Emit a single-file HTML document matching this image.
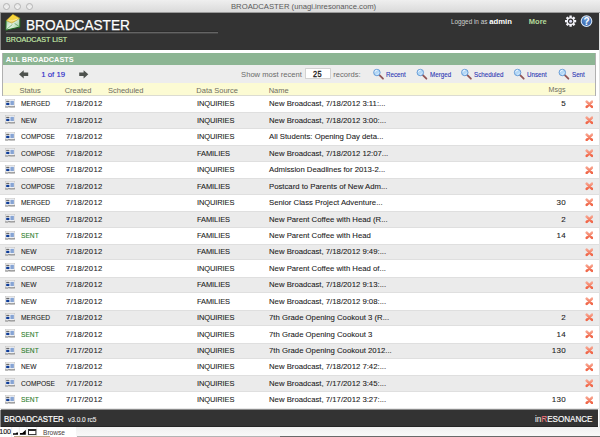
<!DOCTYPE html>
<html><head><meta charset="utf-8">
<style>
*{margin:0;padding:0;box-sizing:border-box}
html,body{width:600px;height:437px;overflow:hidden;background:#fff;font-family:"Liberation Sans",sans-serif}
#win{position:absolute;left:0;top:0;width:600px;height:437px;background:#fff;overflow:hidden}
.a{position:absolute;white-space:nowrap}
#titlebar{left:0;top:0;width:600px;height:13px;background:linear-gradient(#efefef,#dadada);border-bottom:1px solid #9a9a9a}
.light{top:2.9px;width:7px;height:7px;border-radius:50%;border:0.8px solid #b4b4b4;background:linear-gradient(#e6e6e6,#f2f2f2)}
#title{left:231px;top:1.7px;font-size:7.8px;color:#5a5a5a;transform:scaleX(0.985);transform-origin:0 0}
#header{left:1px;top:13px;width:597.8px;height:36.6px;background:#333}
#leftborder{left:0;top:13px;width:1px;height:37px;background:#8a8a8a}
#leftborder2{left:0;top:409.6px;width:1px;height:17.4px;background:#8a8a8a}
#rightborder{left:599px;top:13px;width:1px;height:424px;background:#e2e2e2}
#bigtitle{left:25.7px;top:16.7px;font-size:14.6px;color:#fff;-webkit-text-stroke:0.25px #fff;transform:scaleX(0.935);transform-origin:0 0}
#hline{left:5.8px;top:31px;width:212.5px;height:3px;background:linear-gradient(#2c2c2c 0,#2c2c2c 33%,#646464 33%,#646464 66%,#464646 66%)}
#sub{left:6.4px;top:34.6px;font-size:7.2px;color:#c8eeac;-webkit-text-stroke:0.15px #c8eeac;transform:scaleX(0.99);transform-origin:0 0}
#logged{left:451px;top:17.7px;font-size:6.35px;color:#d0d0d0}
#admin{left:489.3px;top:16.5px;font-size:7.7px;color:#fff;font-weight:bold}
#more{left:528.8px;top:16.9px;font-size:7.5px;font-weight:bold;color:#b5dc9c}
#panel{left:1.5px;top:53.2px;width:594.8px;height:43px;border-left:1px solid #b0b0b0;border-right:1px solid #b0b0b0}
#green{left:0;top:0;width:100%;height:12px;background:#8cb593}
#gtext{left:3.2px;top:2.2px;font-size:7.35px;font-weight:bold;color:#fff}
#tool{left:0;top:12px;width:100%;height:17.8px;background:#ededed}
#yel{left:0;top:29.8px;width:100%;height:13px;background:#fcfbd3;border-bottom:1px solid #dcdcd2}
.hd{top:2.9px;font-size:7.5px;color:#6e6e62}
.tt{font-size:7.6px;color:#6a6a6a;top:6px}
.lk{font-size:6.7px;color:#2a36b4;-webkit-text-stroke:0.1px #2a36b4;transform:scaleX(0.93);transform-origin:0 0}
#rows{left:0;top:96px;width:598.6px}
.r{position:relative;height:16.444px;background:#fff}
.r.g{background:#ebebeb;box-shadow:inset 0 0.8px 0 #dcdcdc,inset 0 -0.8px 0 #dcdcdc}
.r span{position:absolute;top:3.45px;font-size:8.0px;color:#1a1a1a;white-space:nowrap;-webkit-text-stroke:0.08px #1a1a1a;transform:scaleX(0.95);transform-origin:0 0}
.r span.c1{left:20.6px;transform:scaleX(0.83)}
.r span.c2{left:65.6px;letter-spacing:0.25px;transform:scaleX(0.963)}
.r span.c4{left:197.4px;letter-spacing:-0.1px;transform:scaleX(0.935)}
.r span.c5{left:269.4px;transform:scaleX(0.968)}
.r span.c6{right:32.5px;text-align:right;transform:none;letter-spacing:0.35px}
.r span.sent{color:#277a27;-webkit-text-stroke-color:#277a27}
.ic{position:absolute;left:4.8px;top:3px;width:10.2px;height:9px}
.x{position:absolute;left:584.6px;top:3.8px;width:8.8px;height:8.8px}
#footer{left:1px;top:409.6px;width:597px;height:17.4px;background:#333}
#ftitle{left:4.4px;top:413.6px;font-size:8.9px;color:#fff;-webkit-text-stroke:0.2px #fff;transform:scaleX(0.885);transform-origin:0 0}
#fver{left:67.9px;top:415.9px;font-size:6.75px;color:#f0f0f0;-webkit-text-stroke:0.1px #f0f0f0;transform:scaleX(0.96);transform-origin:0 0}
#fres{left:534.8px;top:413.6px;font-size:8.7px;color:#fff;-webkit-text-stroke:0.15px #fff;transform:scaleX(0.93);transform-origin:0 0}
#status{left:0;top:427px;width:600px;height:10px;background:linear-gradient(#f0f0f0,#fafafa)}
#sleft{left:0;top:427px;width:76px;height:10px;background:#fff}
#s100{left:-0.8px;top:428.3px;font-size:7.1px;color:#222;-webkit-text-stroke:0.15px #222}
#sbrowse{left:43px;top:428.6px;font-size:6.6px;color:#4a3c3c}
</style></head><body>
<div id="win">
<svg width="0" height="0" style="position:absolute"><defs><linearGradient id="xg" x1="0" y1="0" x2="0" y2="1"><stop offset="0" stop-color="#f8a08a"/><stop offset="1" stop-color="#f06446"/></linearGradient></defs></svg>
<div class="a" id="titlebar"></div>
<div class="a light" style="left:2.9px"></div>
<div class="a light" style="left:14.2px"></div>
<div class="a light" style="left:25.6px"></div>
<div class="a" id="title">BROADCASTER (unagi.inresonance.com)</div>
<div class="a" id="header"></div>
<div class="a" id="leftborder"></div><div class="a" id="leftborder2"></div>
<div class="a" id="rightborder"></div>
<svg class="a" style="left:0;top:0" width="30" height="34" viewBox="0 0 30 34">
 <defs>
  <linearGradient id="eg" x1="0" y1="0" x2="1" y2="0.6"><stop offset="0" stop-color="#8cc48c"/><stop offset="0.5" stop-color="#e6f4e6"/><stop offset="1" stop-color="#a8d2a8"/></linearGradient>
  <linearGradient id="yg" x1="0" y1="0" x2="0" y2="1"><stop offset="0" stop-color="#ffd92a"/><stop offset="0.55" stop-color="#f4d448"/><stop offset="1" stop-color="#e8cf6a"/></linearGradient>
 </defs>
 <path d="M6,20.6 L19.9,18.2 L19.9,27 L5.9,30.2 Z" fill="url(#eg)" stroke="#1e681e" stroke-width="1"/>
 <path d="M6.2,29.8 L12.4,24.4 M19.6,26.8 L14.6,23.4" stroke="#4e924e" stroke-width="0.7" fill="none"/>
 <path d="M6.2,20.5 L12.8,14.3 L19.9,18.2 L11.8,23.2 Z" fill="url(#yg)" stroke="#a88c28" stroke-width="0.5"/>
 <path d="M8.6,20.6 C11,21.4 14,20.6 17.6,18.9" stroke="#faf2b8" stroke-width="0.8" fill="none"/>
</svg>
<div class="a" id="bigtitle">BROADCASTER</div>
<div class="a" id="hline"></div>
<div class="a" id="sub">BROADCAST LIST</div>
<div class="a" id="logged">Logged in as</div>
<div class="a" id="admin">admin</div>
<div class="a" id="more">More</div>
<svg class="a" style="left:563px;top:14px" width="34" height="15" viewBox="563 14 34 15">
 <g transform="translate(570.6,21.2)" fill="#f4f4fa">
  <path d="M-1.26,-3.69 L-1.13,-5.59 L1.13,-5.59 L1.26,-3.69 L1.72,-3.50 L3.15,-4.75 L4.75,-3.15 L3.50,-1.72 L3.69,-1.26 L5.59,-1.13 L5.59,1.13 L3.69,1.26 L3.50,1.72 L4.75,3.15 L3.15,4.75 L1.72,3.50 L1.26,3.69 L1.13,5.59 L-1.13,5.59 L-1.26,3.69 L-1.72,3.50 L-3.15,4.75 L-4.75,3.15 L-3.50,1.72 L-3.69,1.26 L-5.59,1.13 L-5.59,-1.13 L-3.69,-1.26 L-3.50,-1.72 L-4.75,-3.15 L-3.15,-4.75 L-1.72,-3.50 Z"/>
  <circle r="2.6" fill="#2e2e2e"/>
  <circle r="1.5" fill="#dcdcf4"/>
 </g>
 <defs><radialGradient id="hg" cx="0.5" cy="0.35" r="0.7"><stop offset="0" stop-color="#6a9ad8"/><stop offset="1" stop-color="#2c5ea8"/></radialGradient></defs>
 <circle cx="586.5" cy="21.2" r="5.3" fill="url(#hg)" stroke="#d8e4f4" stroke-width="1.1"/>
 <text x="586.6" y="25" font-family="Liberation Sans" font-weight="bold" font-size="10" fill="#fff" text-anchor="middle">?</text>
</svg>

<div class="a" id="panel">
 <div class="a" id="green"></div>
 <div class="a" id="gtext">ALL BROADCASTS</div>
 <div class="a" id="tool">
  <div class="a tt" style="left:238.6px;top:4.8px">Show most recent</div>
  <div class="a" style="left:302.4px;top:2.6px;width:26.4px;height:11.6px;background:#fff;border:0.8px solid #d2d2d2;border-radius:0.6px"></div>
  <div class="a" style="left:310.9px;top:4.1px;font-size:8.5px;color:#1e1e1e;-webkit-text-stroke:0.35px #1e1e1e;transform:scaleX(0.86);transform-origin:0 0;letter-spacing:0.6px">25</div>
  <div class="a tt" style="left:330.8px;top:4.8px">records:</div>
  <div class="a" style="left:38.7px;top:4.6px;font-size:7.85px;color:#2828c8;-webkit-text-stroke:0.12px #2828c8">1 of 19</div>
 </div>
 <div class="a" id="yel">
  <span class="a hd" style="left:17px">Status</span>
  <span class="a hd" style="left:62.2px">Created</span>
  <span class="a hd" style="left:105.5px">Scheduled</span>
  <span class="a hd" style="left:193.8px">Data Source</span>
  <span class="a hd" style="left:266.2px">Name</span>
  <span class="a hd" style="left:546px;font-size:7.1px">Msgs</span>
 </div>
</div>
<svg class="a" style="left:0;top:60px" width="600" height="24" viewBox="0 60 600 24">
 <path d="M19,74.3 L23.7,70.2 L23.7,72.5 L28.2,72.5 L28.2,76 L23.7,76 L23.7,78.5 Z" fill="#4e524e"/>
 <path d="M88.3,74.3 L83.6,70.2 L83.6,72.5 L79.2,72.5 L79.2,76 L83.6,76 L83.6,78.5 Z" fill="#4e524e"/>
 <g transform="translate(376.9,72.5)"><path d="M2.3,2.3 L6.1,6.2" stroke="#925656" stroke-width="1.8" stroke-linecap="round"/><circle r="3.25" fill="#b4d8f6" stroke="#5a92d2" stroke-width="0.85"/><path d="M-1.9,-0.6 A2,2 0 0 1 0.4,-2.3" stroke="#fff" stroke-width="0.8" fill="none"/><path d="M-0.5,1.9 A2,2 0 0 0 1.9,0.2" stroke="#e8f4ff" stroke-width="0.6" fill="none"/></g><g transform="translate(420.3,72.5)"><path d="M2.3,2.3 L6.1,6.2" stroke="#925656" stroke-width="1.8" stroke-linecap="round"/><circle r="3.25" fill="#b4d8f6" stroke="#5a92d2" stroke-width="0.85"/><path d="M-1.9,-0.6 A2,2 0 0 1 0.4,-2.3" stroke="#fff" stroke-width="0.8" fill="none"/><path d="M-0.5,1.9 A2,2 0 0 0 1.9,0.2" stroke="#e8f4ff" stroke-width="0.6" fill="none"/></g><g transform="translate(464.8,72.5)"><path d="M2.3,2.3 L6.1,6.2" stroke="#925656" stroke-width="1.8" stroke-linecap="round"/><circle r="3.25" fill="#b4d8f6" stroke="#5a92d2" stroke-width="0.85"/><path d="M-1.9,-0.6 A2,2 0 0 1 0.4,-2.3" stroke="#fff" stroke-width="0.8" fill="none"/><path d="M-0.5,1.9 A2,2 0 0 0 1.9,0.2" stroke="#e8f4ff" stroke-width="0.6" fill="none"/></g><g transform="translate(517.6,72.5)"><path d="M2.3,2.3 L6.1,6.2" stroke="#925656" stroke-width="1.8" stroke-linecap="round"/><circle r="3.25" fill="#b4d8f6" stroke="#5a92d2" stroke-width="0.85"/><path d="M-1.9,-0.6 A2,2 0 0 1 0.4,-2.3" stroke="#fff" stroke-width="0.8" fill="none"/><path d="M-0.5,1.9 A2,2 0 0 0 1.9,0.2" stroke="#e8f4ff" stroke-width="0.6" fill="none"/></g><g transform="translate(562.3,72.5)"><path d="M2.3,2.3 L6.1,6.2" stroke="#925656" stroke-width="1.8" stroke-linecap="round"/><circle r="3.25" fill="#b4d8f6" stroke="#5a92d2" stroke-width="0.85"/><path d="M-1.9,-0.6 A2,2 0 0 1 0.4,-2.3" stroke="#fff" stroke-width="0.8" fill="none"/><path d="M-0.5,1.9 A2,2 0 0 0 1.9,0.2" stroke="#e8f4ff" stroke-width="0.6" fill="none"/></g>
</svg>
<div class="a lk" style="left:386.3px;top:70.5px">Recent</div>
<div class="a lk" style="left:429.5px;top:70.5px">Merged</div>
<div class="a lk" style="left:473.9px;top:70.5px">Scheduled</div>
<div class="a lk" style="left:527px;top:70.5px">Unsent</div>
<div class="a lk" style="left:571.5px;top:70.5px">Sent</div>

<div class="a" id="rows">
<div class="r"><svg class="ic" viewBox="0 0 10.2 9"><rect x="0.4" y="0.4" width="9.4" height="8" fill="#f8f8f8" stroke="#c4c4c4" stroke-width="0.6"/><rect x="1.2" y="1.8" width="3.2" height="1.3" fill="#6a6a6a"/><rect x="1.2" y="3.8" width="3.2" height="2.3" fill="#0e3c98"/><rect x="5.4" y="1.8" width="3.5" height="4.3" fill="#86a4d4"/><path d="M0.3,7.9 L2.8,7.9 L3.4,7.5 L6,7.8 L9.9,7.7" stroke="#555" stroke-width="0.7" fill="none"/></svg><span class="c1">MERGED</span><span class="c2">7/18/2012</span><span class="c4">INQUIRIES</span><span class="c5">New Broadcast, 7/18/2012 3:11:...</span><span class="c6">5</span><svg class="x" viewBox="0 0 8.8 8.8"><path d="M1.75,1.65 L7.05,6.95 M7.05,1.65 L1.75,6.95" stroke="url(#xg)" stroke-width="2.6" stroke-linecap="round"/></svg></div>
<div class="r g"><svg class="ic" viewBox="0 0 10.2 9"><rect x="0.4" y="0.4" width="9.4" height="8" fill="#f8f8f8" stroke="#c4c4c4" stroke-width="0.6"/><rect x="1.2" y="1.8" width="3.2" height="1.3" fill="#6a6a6a"/><rect x="1.2" y="3.8" width="3.2" height="2.3" fill="#0e3c98"/><rect x="5.4" y="1.8" width="3.5" height="4.3" fill="#86a4d4"/><path d="M0.3,7.9 L2.8,7.9 L3.4,7.5 L6,7.8 L9.9,7.7" stroke="#555" stroke-width="0.7" fill="none"/></svg><span class="c1">NEW</span><span class="c2">7/18/2012</span><span class="c4">INQUIRIES</span><span class="c5">New Broadcast, 7/18/2012 3:00:...</span><span class="c6"></span><svg class="x" viewBox="0 0 8.8 8.8"><path d="M1.75,1.65 L7.05,6.95 M7.05,1.65 L1.75,6.95" stroke="url(#xg)" stroke-width="2.6" stroke-linecap="round"/></svg></div>
<div class="r"><svg class="ic" viewBox="0 0 10.2 9"><rect x="0.4" y="0.4" width="9.4" height="8" fill="#f8f8f8" stroke="#c4c4c4" stroke-width="0.6"/><rect x="1.2" y="1.8" width="3.2" height="1.3" fill="#6a6a6a"/><rect x="1.2" y="3.8" width="3.2" height="2.3" fill="#0e3c98"/><rect x="5.4" y="1.8" width="3.5" height="4.3" fill="#86a4d4"/><path d="M0.3,7.9 L2.8,7.9 L3.4,7.5 L6,7.8 L9.9,7.7" stroke="#555" stroke-width="0.7" fill="none"/></svg><span class="c1">COMPOSE</span><span class="c2">7/18/2012</span><span class="c4">INQUIRIES</span><span class="c5">All Students: Opening Day deta...</span><span class="c6"></span><svg class="x" viewBox="0 0 8.8 8.8"><path d="M1.75,1.65 L7.05,6.95 M7.05,1.65 L1.75,6.95" stroke="url(#xg)" stroke-width="2.6" stroke-linecap="round"/></svg></div>
<div class="r g"><svg class="ic" viewBox="0 0 10.2 9"><rect x="0.4" y="0.4" width="9.4" height="8" fill="#f8f8f8" stroke="#c4c4c4" stroke-width="0.6"/><rect x="1.2" y="1.8" width="3.2" height="1.3" fill="#6a6a6a"/><rect x="1.2" y="3.8" width="3.2" height="2.3" fill="#0e3c98"/><rect x="5.4" y="1.8" width="3.5" height="4.3" fill="#86a4d4"/><path d="M0.3,7.9 L2.8,7.9 L3.4,7.5 L6,7.8 L9.9,7.7" stroke="#555" stroke-width="0.7" fill="none"/></svg><span class="c1">COMPOSE</span><span class="c2">7/18/2012</span><span class="c4">FAMILIES</span><span class="c5">New Broadcast, 7/18/2012 12:07...</span><span class="c6"></span><svg class="x" viewBox="0 0 8.8 8.8"><path d="M1.75,1.65 L7.05,6.95 M7.05,1.65 L1.75,6.95" stroke="url(#xg)" stroke-width="2.6" stroke-linecap="round"/></svg></div>
<div class="r"><svg class="ic" viewBox="0 0 10.2 9"><rect x="0.4" y="0.4" width="9.4" height="8" fill="#f8f8f8" stroke="#c4c4c4" stroke-width="0.6"/><rect x="1.2" y="1.8" width="3.2" height="1.3" fill="#6a6a6a"/><rect x="1.2" y="3.8" width="3.2" height="2.3" fill="#0e3c98"/><rect x="5.4" y="1.8" width="3.5" height="4.3" fill="#86a4d4"/><path d="M0.3,7.9 L2.8,7.9 L3.4,7.5 L6,7.8 L9.9,7.7" stroke="#555" stroke-width="0.7" fill="none"/></svg><span class="c1">COMPOSE</span><span class="c2">7/18/2012</span><span class="c4">INQUIRIES</span><span class="c5">Admission Deadlines for 2013-2...</span><span class="c6"></span><svg class="x" viewBox="0 0 8.8 8.8"><path d="M1.75,1.65 L7.05,6.95 M7.05,1.65 L1.75,6.95" stroke="url(#xg)" stroke-width="2.6" stroke-linecap="round"/></svg></div>
<div class="r g"><svg class="ic" viewBox="0 0 10.2 9"><rect x="0.4" y="0.4" width="9.4" height="8" fill="#f8f8f8" stroke="#c4c4c4" stroke-width="0.6"/><rect x="1.2" y="1.8" width="3.2" height="1.3" fill="#6a6a6a"/><rect x="1.2" y="3.8" width="3.2" height="2.3" fill="#0e3c98"/><rect x="5.4" y="1.8" width="3.5" height="4.3" fill="#86a4d4"/><path d="M0.3,7.9 L2.8,7.9 L3.4,7.5 L6,7.8 L9.9,7.7" stroke="#555" stroke-width="0.7" fill="none"/></svg><span class="c1">COMPOSE</span><span class="c2">7/18/2012</span><span class="c4">FAMILIES</span><span class="c5">Postcard to Parents of New Adm...</span><span class="c6"></span><svg class="x" viewBox="0 0 8.8 8.8"><path d="M1.75,1.65 L7.05,6.95 M7.05,1.65 L1.75,6.95" stroke="url(#xg)" stroke-width="2.6" stroke-linecap="round"/></svg></div>
<div class="r"><svg class="ic" viewBox="0 0 10.2 9"><rect x="0.4" y="0.4" width="9.4" height="8" fill="#f8f8f8" stroke="#c4c4c4" stroke-width="0.6"/><rect x="1.2" y="1.8" width="3.2" height="1.3" fill="#6a6a6a"/><rect x="1.2" y="3.8" width="3.2" height="2.3" fill="#0e3c98"/><rect x="5.4" y="1.8" width="3.5" height="4.3" fill="#86a4d4"/><path d="M0.3,7.9 L2.8,7.9 L3.4,7.5 L6,7.8 L9.9,7.7" stroke="#555" stroke-width="0.7" fill="none"/></svg><span class="c1">MERGED</span><span class="c2">7/18/2012</span><span class="c4">INQUIRIES</span><span class="c5">Senior Class Project Adventure...</span><span class="c6">30</span><svg class="x" viewBox="0 0 8.8 8.8"><path d="M1.75,1.65 L7.05,6.95 M7.05,1.65 L1.75,6.95" stroke="url(#xg)" stroke-width="2.6" stroke-linecap="round"/></svg></div>
<div class="r g"><svg class="ic" viewBox="0 0 10.2 9"><rect x="0.4" y="0.4" width="9.4" height="8" fill="#f8f8f8" stroke="#c4c4c4" stroke-width="0.6"/><rect x="1.2" y="1.8" width="3.2" height="1.3" fill="#6a6a6a"/><rect x="1.2" y="3.8" width="3.2" height="2.3" fill="#0e3c98"/><rect x="5.4" y="1.8" width="3.5" height="4.3" fill="#86a4d4"/><path d="M0.3,7.9 L2.8,7.9 L3.4,7.5 L6,7.8 L9.9,7.7" stroke="#555" stroke-width="0.7" fill="none"/></svg><span class="c1">MERGED</span><span class="c2">7/18/2012</span><span class="c4">FAMILIES</span><span class="c5">New Parent Coffee with Head (R...</span><span class="c6">2</span><svg class="x" viewBox="0 0 8.8 8.8"><path d="M1.75,1.65 L7.05,6.95 M7.05,1.65 L1.75,6.95" stroke="url(#xg)" stroke-width="2.6" stroke-linecap="round"/></svg></div>
<div class="r"><svg class="ic" viewBox="0 0 10.2 9"><rect x="0.4" y="0.4" width="9.4" height="8" fill="#f8f8f8" stroke="#c4c4c4" stroke-width="0.6"/><rect x="1.2" y="1.8" width="3.2" height="1.3" fill="#6a6a6a"/><rect x="1.2" y="3.8" width="3.2" height="2.3" fill="#0e3c98"/><rect x="5.4" y="1.8" width="3.5" height="4.3" fill="#86a4d4"/><path d="M0.3,7.9 L2.8,7.9 L3.4,7.5 L6,7.8 L9.9,7.7" stroke="#555" stroke-width="0.7" fill="none"/></svg><span class="c1 sent">SENT</span><span class="c2">7/18/2012</span><span class="c4">FAMILIES</span><span class="c5">New Parent Coffee with Head</span><span class="c6">14</span><svg class="x" viewBox="0 0 8.8 8.8"><path d="M1.75,1.65 L7.05,6.95 M7.05,1.65 L1.75,6.95" stroke="url(#xg)" stroke-width="2.6" stroke-linecap="round"/></svg></div>
<div class="r g"><svg class="ic" viewBox="0 0 10.2 9"><rect x="0.4" y="0.4" width="9.4" height="8" fill="#f8f8f8" stroke="#c4c4c4" stroke-width="0.6"/><rect x="1.2" y="1.8" width="3.2" height="1.3" fill="#6a6a6a"/><rect x="1.2" y="3.8" width="3.2" height="2.3" fill="#0e3c98"/><rect x="5.4" y="1.8" width="3.5" height="4.3" fill="#86a4d4"/><path d="M0.3,7.9 L2.8,7.9 L3.4,7.5 L6,7.8 L9.9,7.7" stroke="#555" stroke-width="0.7" fill="none"/></svg><span class="c1">NEW</span><span class="c2">7/18/2012</span><span class="c4">FAMILIES</span><span class="c5">New Broadcast, 7/18/2012 9:49:...</span><span class="c6"></span><svg class="x" viewBox="0 0 8.8 8.8"><path d="M1.75,1.65 L7.05,6.95 M7.05,1.65 L1.75,6.95" stroke="url(#xg)" stroke-width="2.6" stroke-linecap="round"/></svg></div>
<div class="r"><svg class="ic" viewBox="0 0 10.2 9"><rect x="0.4" y="0.4" width="9.4" height="8" fill="#f8f8f8" stroke="#c4c4c4" stroke-width="0.6"/><rect x="1.2" y="1.8" width="3.2" height="1.3" fill="#6a6a6a"/><rect x="1.2" y="3.8" width="3.2" height="2.3" fill="#0e3c98"/><rect x="5.4" y="1.8" width="3.5" height="4.3" fill="#86a4d4"/><path d="M0.3,7.9 L2.8,7.9 L3.4,7.5 L6,7.8 L9.9,7.7" stroke="#555" stroke-width="0.7" fill="none"/></svg><span class="c1">COMPOSE</span><span class="c2">7/18/2012</span><span class="c4">INQUIRIES</span><span class="c5">New Parent Coffee with Head of...</span><span class="c6"></span><svg class="x" viewBox="0 0 8.8 8.8"><path d="M1.75,1.65 L7.05,6.95 M7.05,1.65 L1.75,6.95" stroke="url(#xg)" stroke-width="2.6" stroke-linecap="round"/></svg></div>
<div class="r g"><svg class="ic" viewBox="0 0 10.2 9"><rect x="0.4" y="0.4" width="9.4" height="8" fill="#f8f8f8" stroke="#c4c4c4" stroke-width="0.6"/><rect x="1.2" y="1.8" width="3.2" height="1.3" fill="#6a6a6a"/><rect x="1.2" y="3.8" width="3.2" height="2.3" fill="#0e3c98"/><rect x="5.4" y="1.8" width="3.5" height="4.3" fill="#86a4d4"/><path d="M0.3,7.9 L2.8,7.9 L3.4,7.5 L6,7.8 L9.9,7.7" stroke="#555" stroke-width="0.7" fill="none"/></svg><span class="c1">NEW</span><span class="c2">7/18/2012</span><span class="c4">FAMILIES</span><span class="c5">New Broadcast, 7/18/2012 9:13:...</span><span class="c6"></span><svg class="x" viewBox="0 0 8.8 8.8"><path d="M1.75,1.65 L7.05,6.95 M7.05,1.65 L1.75,6.95" stroke="url(#xg)" stroke-width="2.6" stroke-linecap="round"/></svg></div>
<div class="r"><svg class="ic" viewBox="0 0 10.2 9"><rect x="0.4" y="0.4" width="9.4" height="8" fill="#f8f8f8" stroke="#c4c4c4" stroke-width="0.6"/><rect x="1.2" y="1.8" width="3.2" height="1.3" fill="#6a6a6a"/><rect x="1.2" y="3.8" width="3.2" height="2.3" fill="#0e3c98"/><rect x="5.4" y="1.8" width="3.5" height="4.3" fill="#86a4d4"/><path d="M0.3,7.9 L2.8,7.9 L3.4,7.5 L6,7.8 L9.9,7.7" stroke="#555" stroke-width="0.7" fill="none"/></svg><span class="c1">NEW</span><span class="c2">7/18/2012</span><span class="c4">FAMILIES</span><span class="c5">New Broadcast, 7/18/2012 9:08:...</span><span class="c6"></span><svg class="x" viewBox="0 0 8.8 8.8"><path d="M1.75,1.65 L7.05,6.95 M7.05,1.65 L1.75,6.95" stroke="url(#xg)" stroke-width="2.6" stroke-linecap="round"/></svg></div>
<div class="r g"><svg class="ic" viewBox="0 0 10.2 9"><rect x="0.4" y="0.4" width="9.4" height="8" fill="#f8f8f8" stroke="#c4c4c4" stroke-width="0.6"/><rect x="1.2" y="1.8" width="3.2" height="1.3" fill="#6a6a6a"/><rect x="1.2" y="3.8" width="3.2" height="2.3" fill="#0e3c98"/><rect x="5.4" y="1.8" width="3.5" height="4.3" fill="#86a4d4"/><path d="M0.3,7.9 L2.8,7.9 L3.4,7.5 L6,7.8 L9.9,7.7" stroke="#555" stroke-width="0.7" fill="none"/></svg><span class="c1">MERGED</span><span class="c2">7/18/2012</span><span class="c4">INQUIRIES</span><span class="c5">7th Grade Opening Cookout 3 (R...</span><span class="c6">2</span><svg class="x" viewBox="0 0 8.8 8.8"><path d="M1.75,1.65 L7.05,6.95 M7.05,1.65 L1.75,6.95" stroke="url(#xg)" stroke-width="2.6" stroke-linecap="round"/></svg></div>
<div class="r"><svg class="ic" viewBox="0 0 10.2 9"><rect x="0.4" y="0.4" width="9.4" height="8" fill="#f8f8f8" stroke="#c4c4c4" stroke-width="0.6"/><rect x="1.2" y="1.8" width="3.2" height="1.3" fill="#6a6a6a"/><rect x="1.2" y="3.8" width="3.2" height="2.3" fill="#0e3c98"/><rect x="5.4" y="1.8" width="3.5" height="4.3" fill="#86a4d4"/><path d="M0.3,7.9 L2.8,7.9 L3.4,7.5 L6,7.8 L9.9,7.7" stroke="#555" stroke-width="0.7" fill="none"/></svg><span class="c1 sent">SENT</span><span class="c2">7/18/2012</span><span class="c4">INQUIRIES</span><span class="c5">7th Grade Opening Cookout 3</span><span class="c6">14</span><svg class="x" viewBox="0 0 8.8 8.8"><path d="M1.75,1.65 L7.05,6.95 M7.05,1.65 L1.75,6.95" stroke="url(#xg)" stroke-width="2.6" stroke-linecap="round"/></svg></div>
<div class="r g"><svg class="ic" viewBox="0 0 10.2 9"><rect x="0.4" y="0.4" width="9.4" height="8" fill="#f8f8f8" stroke="#c4c4c4" stroke-width="0.6"/><rect x="1.2" y="1.8" width="3.2" height="1.3" fill="#6a6a6a"/><rect x="1.2" y="3.8" width="3.2" height="2.3" fill="#0e3c98"/><rect x="5.4" y="1.8" width="3.5" height="4.3" fill="#86a4d4"/><path d="M0.3,7.9 L2.8,7.9 L3.4,7.5 L6,7.8 L9.9,7.7" stroke="#555" stroke-width="0.7" fill="none"/></svg><span class="c1 sent">SENT</span><span class="c2">7/17/2012</span><span class="c4">INQUIRIES</span><span class="c5">7th Grade Opening Cookout 2012...</span><span class="c6">130</span><svg class="x" viewBox="0 0 8.8 8.8"><path d="M1.75,1.65 L7.05,6.95 M7.05,1.65 L1.75,6.95" stroke="url(#xg)" stroke-width="2.6" stroke-linecap="round"/></svg></div>
<div class="r"><svg class="ic" viewBox="0 0 10.2 9"><rect x="0.4" y="0.4" width="9.4" height="8" fill="#f8f8f8" stroke="#c4c4c4" stroke-width="0.6"/><rect x="1.2" y="1.8" width="3.2" height="1.3" fill="#6a6a6a"/><rect x="1.2" y="3.8" width="3.2" height="2.3" fill="#0e3c98"/><rect x="5.4" y="1.8" width="3.5" height="4.3" fill="#86a4d4"/><path d="M0.3,7.9 L2.8,7.9 L3.4,7.5 L6,7.8 L9.9,7.7" stroke="#555" stroke-width="0.7" fill="none"/></svg><span class="c1">NEW</span><span class="c2">7/18/2012</span><span class="c4">INQUIRIES</span><span class="c5">New Broadcast, 7/18/2012 7:42:...</span><span class="c6"></span><svg class="x" viewBox="0 0 8.8 8.8"><path d="M1.75,1.65 L7.05,6.95 M7.05,1.65 L1.75,6.95" stroke="url(#xg)" stroke-width="2.6" stroke-linecap="round"/></svg></div>
<div class="r g"><svg class="ic" viewBox="0 0 10.2 9"><rect x="0.4" y="0.4" width="9.4" height="8" fill="#f8f8f8" stroke="#c4c4c4" stroke-width="0.6"/><rect x="1.2" y="1.8" width="3.2" height="1.3" fill="#6a6a6a"/><rect x="1.2" y="3.8" width="3.2" height="2.3" fill="#0e3c98"/><rect x="5.4" y="1.8" width="3.5" height="4.3" fill="#86a4d4"/><path d="M0.3,7.9 L2.8,7.9 L3.4,7.5 L6,7.8 L9.9,7.7" stroke="#555" stroke-width="0.7" fill="none"/></svg><span class="c1">COMPOSE</span><span class="c2">7/17/2012</span><span class="c4">INQUIRIES</span><span class="c5">New Broadcast, 7/17/2012 3:45:...</span><span class="c6"></span><svg class="x" viewBox="0 0 8.8 8.8"><path d="M1.75,1.65 L7.05,6.95 M7.05,1.65 L1.75,6.95" stroke="url(#xg)" stroke-width="2.6" stroke-linecap="round"/></svg></div>
<div class="r"><svg class="ic" viewBox="0 0 10.2 9"><rect x="0.4" y="0.4" width="9.4" height="8" fill="#f8f8f8" stroke="#c4c4c4" stroke-width="0.6"/><rect x="1.2" y="1.8" width="3.2" height="1.3" fill="#6a6a6a"/><rect x="1.2" y="3.8" width="3.2" height="2.3" fill="#0e3c98"/><rect x="5.4" y="1.8" width="3.5" height="4.3" fill="#86a4d4"/><path d="M0.3,7.9 L2.8,7.9 L3.4,7.5 L6,7.8 L9.9,7.7" stroke="#555" stroke-width="0.7" fill="none"/></svg><span class="c1 sent">SENT</span><span class="c2">7/17/2012</span><span class="c4">INQUIRIES</span><span class="c5">New Broadcast, 7/17/2012 3:27:...</span><span class="c6">130</span><svg class="x" viewBox="0 0 8.8 8.8"><path d="M1.75,1.65 L7.05,6.95 M7.05,1.65 L1.75,6.95" stroke="url(#xg)" stroke-width="2.6" stroke-linecap="round"/></svg></div>
</div>

<div class="a" style="left:0;top:408px;width:600px;height:1px;background:#e8e8e8"></div><div class="a" style="left:1px;top:409px;width:597px;height:1px;background:#8c8c8c"></div><div class="a" id="footer"></div><div class="a" style="left:1px;top:426px;width:597px;height:1px;background:#252525"></div>
<div class="a" id="ftitle">BROADCASTER</div>
<div class="a" id="fver">v3.0.0 rc5</div>
<div class="a" id="fres"><span style="color:#d4d4d4">in</span><span style="color:#dc1a22">R</span>ESONANCE</div>
<div class="a" id="status"></div>
<div class="a" id="sleft"></div>
<div class="a" id="s100">100</div>
<svg class="a" style="left:11px;top:427px" width="28" height="10" viewBox="11 427 28 10">
 <path d="M11.7,427 V437 M19.3,427 V437 M27,427 V437 M36.7,427 V437" stroke="#dcdcdc" stroke-width="0.6"/>
 <path d="M13,434.8 L13,433.3 L16,433.3 L16.6,432.4 L18,432.4 L18,434.8 Z" fill="#000"/>
 <path d="M20,434.8 L20,433 L22.4,433 L25.8,429.8 L25.8,434.8 Z" fill="#000"/>
 <rect x="28.5" y="429.5" width="7.4" height="5.1" fill="#fff" stroke="#2a2a2a" stroke-width="1"/>
 <rect x="28.5" y="429.5" width="7.4" height="1.5" fill="#2a2a2a"/>
</svg>
<div class="a" id="sbrowse">Browse</div>
<div class="a" style="left:14px;top:436px;width:36px;height:1px;background:#c0a888"></div><div class="a" style="left:77px;top:436px;width:203px;height:1px;background:#b4b4b4"></div><div class="a" style="left:280px;top:436px;width:320px;height:1px;background:#6a6a6a"></div>
</div>
</body></html>
